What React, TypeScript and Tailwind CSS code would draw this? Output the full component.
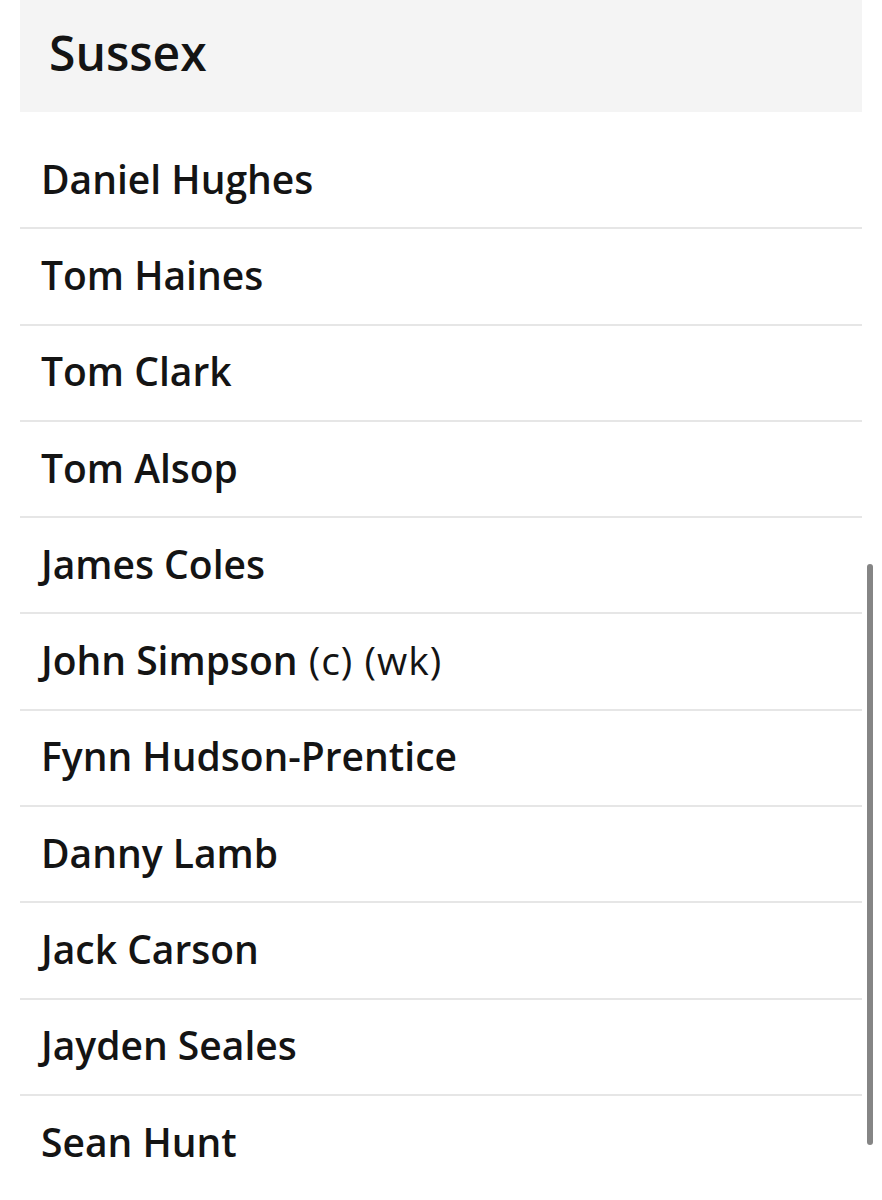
const players = [
  "Daniel Hughes",
  "Tom Haines",
  "Tom Clark",
  "Tom Alsop",
  "James Coles",
  "John Simpson",
  "Fynn Hudson-Prentice",
  "Danny Lamb",
  "Jack Carson",
  "Jayden Seales",
  "Sean Hunt",
];

export default function App() {
  return (
    <div
      className="relative h-[1200px] w-[882px] overflow-hidden bg-white text-[#141414]"
      style={{ fontFamily: '"Open Sans", "Noto Sans", sans-serif' }}
    >
      <div className="mx-[20px]">
        <div className="flex h-[112px] items-center bg-[#f4f4f4] px-[29px] pb-[6px]">
          <h1 className="text-[48px] font-semibold leading-none">Sussex</h1>
        </div>
        <div className="pt-[21px]">
          {players.map((p, i) => (
            <div
              key={p}
              className={
                i < players.length - 1
                  ? "flex h-[96.3px] items-center border-b-2 border-[#e6e6e6] px-[21px] pb-[4px]"
                  : "flex h-[96.3px] items-center px-[21px] pb-[6px]"
              }
            >
              <span className="text-[39px] font-semibold leading-none">
                {p}
                {p === "John Simpson" && (
                  <span className="font-normal tracking-[1px]"> (c) (wk)</span>
                )}
              </span>
            </div>
          ))}
        </div>
      </div>
      {/* overlay scrollbar */}
      <div className="absolute left-[867px] top-[564px] h-[581px] w-[6px] rounded-full bg-[#858585]" />
    </div>
  );
}
